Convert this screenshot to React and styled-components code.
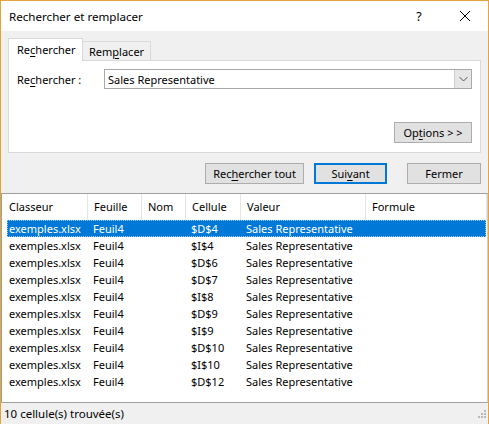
import React from "react";
import styled, { createGlobalStyle, css } from "styled-components";

const GlobalStyle = createGlobalStyle`
  html, body { margin: 0; padding: 0; background: #ffffff; }
  body { font-family: "Noto Sans", "Open Sans", sans-serif; font-size: 11px; color: #000; }
  * { box-sizing: border-box; }
`;

const ORANGE = "#e8a23c";

const Window = styled.div`
  width: 489px;
  height: 424px;
  border: 1px solid ${ORANGE};
  border-bottom: none;
  background: #f0f0f0;
  display: flex;
  flex-direction: column;
  overflow: hidden;
`;

const TitleBar = styled.div`
  height: 30px;
  flex: none;
  background: #ffffff;
  display: flex;
  align-items: center;
  padding-left: 8px;
`;

const Title = styled.div`
  flex: 1;
  font-size: 11.6px;
  padding-top: 1px;
`;

const TitleButton = styled.div`
  width: 46px;
  height: 30px;
  display: flex;
  align-items: center;
  justify-content: center;
  font-size: 12.5px;
`;

const Body = styled.div`
  padding: 7px 7px 0 7px;
  flex: none;
`;

const TabRow = styled.div`
  display: flex;
  align-items: flex-end;
  height: 23px;
  position: relative;
  z-index: 1;
  margin-bottom: -1px;
`;

const Tab = styled.div`
  border: 1px solid #d9d9d9;
  border-bottom: none;
  display: flex;
  align-items: center;
  ${(p) =>
    p.$active
      ? css`
          height: 23px;
          width: 75px;
          background: #ffffff;
          padding-left: 8px;
          padding-bottom: 1px;
        `
      : css`
          height: 19px;
          width: 68px;
          background: #f0f0f0;
          border-left: none;
          padding-left: 6px;
          margin-bottom: 1px;
        `}
`;

const Key = styled.span`
  text-decoration: underline;
  text-underline-offset: 2px;
`;

const Panel = styled.div`
  height: 93px;
  border: 1px solid #d9d9d9;
  background: #ffffff;
  padding: 8px 8px 9px 8px;
  display: flex;
  flex-direction: column;
  justify-content: space-between;
`;

const FieldRow = styled.div`
  display: flex;
  align-items: center;
  height: 20px;
`;

const FieldLabel = styled.div`
  width: 87px;
`;

const Combo = styled.div`
  flex: 1;
  height: 20px;
  border: 1px solid #a9a9a9;
  background: #ffffff;
  display: flex;
  align-items: center;
  padding-left: 3px;
`;

const ComboText = styled.div`
  flex: 1;
`;

const ComboArrow = styled.div`
  width: 17px;
  height: 18px;
  background: #e6e6e6;
  border-left: 1px solid #cfcfcf;
  display: flex;
  align-items: center;
  justify-content: center;
`;

const OptionsRow = styled.div`
  display: flex;
  justify-content: flex-end;
`;

const Button = styled.div`
  height: 21px;
  width: ${(p) => p.$w}px;
  background: #e1e1e1;
  border: 1px solid ${(p) => (p.$default ? "#0078d7" : "#adadad")};
  box-shadow: ${(p) => (p.$default ? "inset 0 0 0 1px #0078d7" : "none")};
  display: flex;
  align-items: center;
  justify-content: center;
  padding-bottom: 1px;
`;

const ButtonRow = styled.div`
  display: flex;
  justify-content: flex-end;
  margin-top: 10px;
  gap: 20px;
`;

const ButtonGroup = styled.div`
  display: flex;
  gap: ${(p) => p.$gap}px;
`;

const List = styled.div`
  margin-top: 9px;
  flex: 1;
  background: #ffffff;
  border: 1px solid #a0a0a0;
  border-right-color: #d0d0d0;
  display: flex;
  flex-direction: column;
`;

const COLS = "85px 54px 44px 55px 125px 1fr";

const HeaderRow = styled.div`
  display: grid;
  grid-template-columns: ${COLS};
  height: 26px;
  margin-left: 1px;
`;

const HeaderCell = styled.div`
  display: flex;
  align-items: center;
  padding-left: 6px;
  border-right: 1px solid #e5e5e5;
  padding-bottom: 1px;
`;

const Row = styled.div`
  display: grid;
  grid-template-columns: 80px 54px 44px 55px 125px 1fr;
  height: 17px;
  margin-left: 5px;
  margin-right: 1px;
  align-items: center;
  ${(p) =>
    p.$selected &&
    css`
      background: #0078d7;
      color: #ffffff;
      outline: 1px dotted #9ccbf0;
      outline-offset: -1px;
    `}
`;

const Cell = styled.div`
  padding-left: ${(p) => (p.$first ? 2 : 6)}px;
  white-space: nowrap;
  overflow: hidden;
  line-height: 17px;
`;

const StatusBar = styled.div`
  height: 21px;
  flex: none;
  display: flex;
  align-items: center;
  justify-content: space-between;
  padding-left: 3px;
  padding-right: 2px;
  font-size: 11.5px;
`;

const rows = ["$D$4", "$I$4", "$D$6", "$D$7", "$I$8", "$D$9", "$I$9", "$D$10", "$I$10", "$D$12"];

function CloseIcon() {
  return (
    <svg width="12" height="12" viewBox="0 0 12 12">
      <path d="M1 1 L11 11 M11 1 L1 11" stroke="#000" strokeWidth="1" fill="none" />
    </svg>
  );
}

function Chevron() {
  return (
    <svg width="9" height="6" viewBox="0 0 9 6">
      <path d="M0.5 1 L4.5 5 L8.5 1" stroke="#555" strokeWidth="1" fill="none" />
    </svg>
  );
}

function Grip() {
  const dots = [
    [9, 1],
    [6, 4], [9, 4],
    [3, 7], [6, 7], [9, 7],
  ];
  return (
    <svg width="11" height="10" viewBox="0 0 11 10">
      {dots.map(([x, y], i) => (
        <rect key={i} x={x} y={y} width="2" height="2" fill="#b8b8b8" />
      ))}
    </svg>
  );
}

export default function App() {
  return (
    <>
      <GlobalStyle />
      <Window>
        <TitleBar>
          <Title>Rechercher et remplacer</Title>
          <TitleButton>?</TitleButton>
          <TitleButton>
            <CloseIcon />
          </TitleButton>
        </TitleBar>
        <Body>
          <TabRow>
            <Tab $active>
              Re<Key>c</Key>hercher
            </Tab>
            <Tab>
              Rem<Key>p</Key>lacer
            </Tab>
          </TabRow>
          <Panel>
            <FieldRow>
              <FieldLabel>
                Re<Key>c</Key>hercher :
              </FieldLabel>
              <Combo>
                <ComboText>Sales Representative</ComboText>
                <ComboArrow>
                  <Chevron />
                </ComboArrow>
              </Combo>
            </FieldRow>
            <OptionsRow>
              <Button $w={78}>
                <span>
                  Op<Key>t</Key>ions &gt; &gt;
                </span>
              </Button>
            </OptionsRow>
          </Panel>
          <ButtonRow>
            <ButtonGroup $gap={10}>
              <Button $w={99}>
                <span>
                  Rec<Key>h</Key>ercher tout
                </span>
              </Button>
              <Button $w={73} $default>
                <span>
                  Sui<Key>v</Key>ant
                </span>
              </Button>
            </ButtonGroup>
            <Button $w={74}>Fermer</Button>
          </ButtonRow>
        </Body>
        <List>
          <HeaderRow>
            <HeaderCell>Classeur</HeaderCell>
            <HeaderCell>Feuille</HeaderCell>
            <HeaderCell>Nom</HeaderCell>
            <HeaderCell>Cellule</HeaderCell>
            <HeaderCell>Valeur</HeaderCell>
            <HeaderCell>Formule</HeaderCell>
          </HeaderRow>
          {rows.map((c, i) => (
            <Row key={i} $selected={i === 0}>
              <Cell $first>exemples.xlsx</Cell>
              <Cell>Feuil4</Cell>
              <Cell></Cell>
              <Cell>{c}</Cell>
              <Cell>Sales Representative</Cell>
              <Cell></Cell>
            </Row>
          ))}
        </List>
        <StatusBar>
          <span>10 cellule(s) trouvée(s)</span>
          <Grip />
        </StatusBar>
      </Window>
    </>
  );
}
